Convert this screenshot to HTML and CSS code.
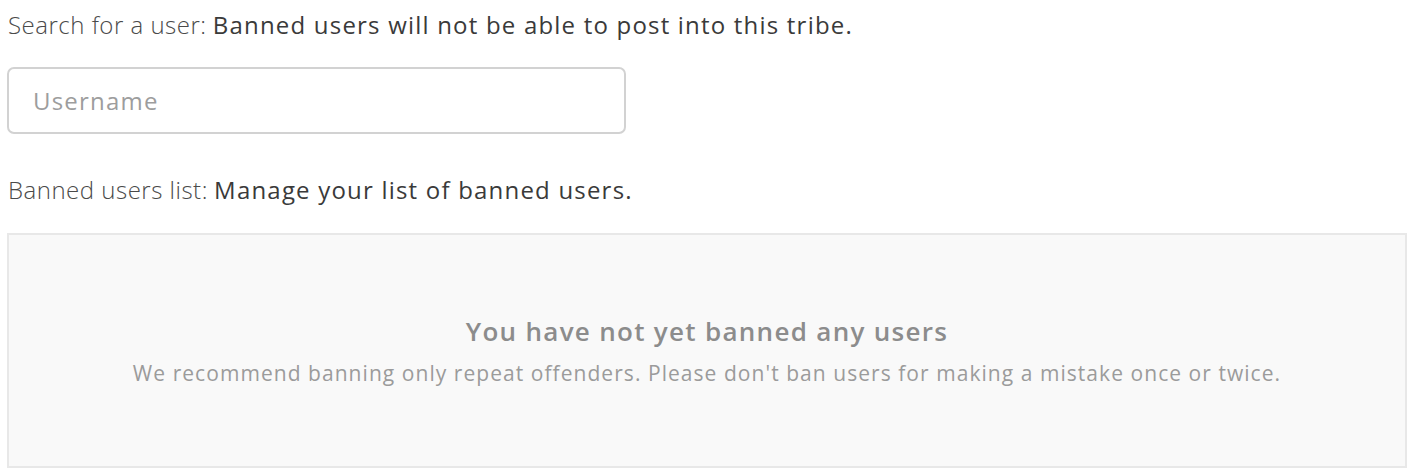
FILE: index.html
```html
<!DOCTYPE html>
<html>
<head>
<meta charset="utf-8">
<link rel="stylesheet" href="styles.css">
</head>
<body>
<div class="page">
  <div class="field field-search">
    <div class="field-label"><span class="label">Search for a user:</span> <span class="desc">Banned users will not be able to post into this tribe.</span></div>
    <input class="input" type="text" placeholder="Username">
  </div>
  <div class="field field-list">
    <div class="field-label"><span class="label">Banned users list:</span> <span class="desc">Manage your list of banned users.</span></div>
    <div class="empty">
      <div class="empty-title">You have not yet banned any users</div>
      <div class="empty-text">We recommend banning only repeat offenders. Please don't ban users for making a mistake once or twice.</div>
    </div>
  </div>
</div>
</body>
</html>
```
FILE: styles.css
```css
html, body {
  margin: 0;
  padding: 0;
  background: #fff;
}
body {
  font-family: "Open Sans", "Noto Sans", sans-serif;
  color: #333;
}
.page {
  padding: 8px 7px 6px 7px;
  display: flex;
  flex-direction: column;
  gap: 39px;
}
.field {
  display: flex;
  flex-direction: column;
}
.field-search {
  gap: 25px;
}
.field-list {
  gap: 26px;
}
.field-label {
  font-size: 24px;
  line-height: 34px;
  height: 34px;
  padding-left: 1px;
  white-space: nowrap;
}
.label {
  font-size: 24px;
  font-weight: 300;
  letter-spacing: 0.5px;
  color: #4a4a4a;
}
.desc {
  font-size: 24px;
  letter-spacing: 1.2px;
  color: #3a3a3a;
}
.input {
  box-sizing: border-box;
  width: 619px;
  height: 67px;
  border: 2px solid #d2d2d2;
  border-radius: 7px;
  padding: 0 24px;
  font-family: inherit;
  font-size: 24px;
  letter-spacing: 1.2px;
  color: #333;
  outline: none;
  margin: 0;
  background: #fff;
}
.input::placeholder {
  color: #9d9d9d;
}
.empty {
  box-sizing: border-box;
  height: 235px;
  border: 2px solid #e8e8e8;
  background: #f9f9f9;
  display: flex;
  flex-direction: column;
  align-items: center;
  justify-content: center;
  gap: 9px;
}
.empty-title {
  font-size: 26px;
  font-weight: 600;
  letter-spacing: 1.3px;
  line-height: 36px;
  color: #8c8c8c;
}
.empty-text {
  font-size: 21px;
  letter-spacing: 1.05px;
  line-height: 30px;
  color: #9b9b9b;
}
```
